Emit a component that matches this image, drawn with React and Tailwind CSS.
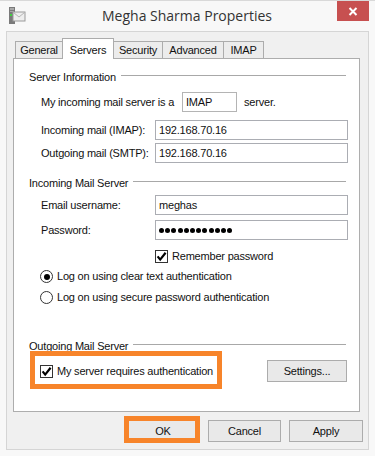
import React from "react";

function CheckBox() {
  return (
    <span className="flex h-[13px] w-[13px] shrink-0 items-center justify-center border border-[#333333] bg-white">
      <svg width="11" height="11" viewBox="0 0 11 11">
        <path d="M1.6 5.4 L4.2 8.6 L9.6 1.8" fill="none" stroke="#000" strokeWidth="2.2" />
      </svg>
    </span>
  );
}

function Radio({ checked }) {
  return (
    <span className="flex h-[13px] w-[13px] shrink-0 items-center justify-center rounded-full border border-[#333333] bg-white">
      {checked && <span className="h-[6px] w-[6px] rounded-full bg-black" />}
    </span>
  );
}

function GroupHeader({ children }) {
  return (
    <div className="flex h-[13px] items-center pl-[15px] pr-[13px]">
      <span className="leading-[13px] whitespace-nowrap">{children}</span>
      <div className="ml-[5px] mb-[4px] h-px flex-1 bg-[#a8a8a8]" />
    </div>
  );
}

function Field({ children }) {
  return (
    <div className="flex h-[20px] w-[193px] items-center border border-[#abadb3] bg-white pl-[3px]">
      {children}
    </div>
  );
}

function FieldRow({ label, children, cls }) {
  return (
    <div className={"flex h-[20px] items-center pl-[27px] " + cls}>
      <span className="w-[114px] leading-[13px]">{label}</span>
      <Field>{children}</Field>
    </div>
  );
}

function Btn({ children, w }) {
  return (
    <div
      className={
        "flex h-[22px] items-center justify-center border border-[#acacac] bg-[#e9e9e9] " + w
      }
    >
      {children}
    </div>
  );
}

export default function App() {
  return (
    <div className="flex h-[456px] w-[375px] flex-col overflow-hidden border-t border-[#d9d9d9] bg-[#f8f8f8] font-['Liberation_Sans',Arial,sans-serif] text-[11px] tracking-[-0.2px] text-[#111]">
      {/* Title bar */}
      <div className="flex h-[30px] items-start">
        <div className="w-[37px] pl-[8px] pt-[6px]">
          <svg width="18" height="18" viewBox="0 0 18 18">
            <rect x="1" y="0" width="6" height="17" fill="#7a7a7a" />
            <rect x="2" y="1" width="4" height="2" fill="#a9a9a9" />
            <rect x="2" y="4" width="4" height="1" fill="#a9a9a9" />
            <rect x="2" y="7" width="2" height="2" fill="#3ed13e" />
            <rect x="5" y="5" width="12" height="9" fill="#eeeeee" stroke="#9a9a9a" strokeWidth="1" />
            <path d="M5.5 5.5 L11 10 L16.5 5.5" fill="none" stroke="#b5b5b5" strokeWidth="1" />
          </svg>
        </div>
        <div className="flex-1 pt-[5px] text-center font-['Open_Sans',sans-serif] text-[14px] leading-[20px] tracking-normal text-[#333333]">
          Megha Sharma Properties
        </div>
        <div className="mr-[6px] flex h-[20px] w-[32px] items-center justify-center bg-[#c75050]">
          <svg width="10" height="9" viewBox="0 0 10 9">
            <path d="M1.5 1 L8.5 8 M8.5 1 L1.5 8" stroke="#fff" strokeWidth="2" />
          </svg>
        </div>
      </div>

      {/* Client area */}
      <div className="ml-[6px] flex h-[419px] w-[363px] flex-col border border-[#d5d5d5] bg-[#f0f0f0]">
        {/* Tabs */}
        <div className="ml-[8px] mt-[6px] flex h-[20px] items-end">
          <div className="flex h-[17px] w-[47px] items-center justify-center border-l border-t border-[#acacac] bg-[#ececec]">
            General
          </div>
          <div className="relative z-10 -mb-px flex h-[21px] w-[52px] items-start justify-center border-x border-t border-[#acacac] bg-white pt-[3px]">
            Servers
          </div>
          <div className="flex h-[17px] w-[48px] items-center justify-center border-t border-[#acacac] bg-[#ececec]">
            Security
          </div>
          <div className="flex h-[17px] w-[61px] items-center justify-center border-l border-t border-[#acacac] bg-[#ececec]">
            Advanced
          </div>
          <div className="flex h-[17px] w-[41px] items-center justify-center border-x border-t border-[#acacac] bg-[#ececec]">
            IMAP
          </div>
        </div>

        {/* Panel */}
        <div className="ml-[6px] flex h-[354px] w-[347px] flex-col border border-[#adadad] bg-white">
          <div className="mt-[12px]">
            <GroupHeader>Server Information</GroupHeader>
          </div>
          <div className="mt-[8px] flex h-[20px] items-center pl-[27px]">
            <span className="w-[141px]">My incoming mail server is a</span>
            <div className="flex h-[20px] w-[55px] items-center border border-[#b4b4b4] pl-[3px]">IMAP</div>
            <span className="ml-[7px]">server.</span>
          </div>
          <FieldRow label="Incoming mail (IMAP):" cls="mt-[8px]">192.168.70.16</FieldRow>
          <FieldRow label="Outgoing mail (SMTP):" cls="mt-[3px]">192.168.70.16</FieldRow>

          <div className="mt-[14px]">
            <GroupHeader>Incoming Mail Server</GroupHeader>
          </div>
          <FieldRow label="Email username:" cls="mt-[5px]">meghas</FieldRow>
          <FieldRow label="Password:" cls="mt-[5px]">
            <div className="flex gap-[1.2px]">
              {Array.from({ length: 12 }).map((_, i) => (
                <span key={i} className="h-[5px] w-[5px] rounded-full bg-black" />
              ))}
            </div>
          </FieldRow>
          <div className="mt-[10px] flex h-[13px] items-center gap-[4px] pl-[141px]">
            <CheckBox />
            <span>Remember password</span>
          </div>
          <div className="mt-[7px] flex h-[13px] items-center gap-[4px] pl-[26px]">
            <Radio checked />
            <span>Log on using clear text authentication</span>
          </div>
          <div className="mt-[8px] flex h-[13px] items-center gap-[4px] pl-[26px]">
            <Radio />
            <span>Log on using secure password authentication</span>
          </div>

          <div className="mt-[36px]">
            <GroupHeader>Outgoing Mail Server</GroupHeader>
          </div>
          <div className="relative mt-[7px] flex h-[22px] items-center pl-[26px]">
            <div className="flex items-center gap-[4px]">
              <CheckBox />
              <span>My server requires authentication</span>
            </div>
            <div className="ml-auto mr-[12px]">
              <Btn w="w-[80px]">Settings...</Btn>
            </div>
            <div className="absolute left-[16px] top-[-9px] h-[38px] w-[192px] border-[5px] border-[#f7842a]" />
          </div>
        </div>

        {/* Bottom buttons */}
        <div className="mt-[8px] flex justify-end gap-[8px] pr-[5px]">
          <div className="relative">
            <Btn w="w-[74px]">OK</Btn>
            <div className="absolute left-[-2px] top-[-4px] h-[27px] w-[76px] border-[5px] border-[#f7842a]" />
          </div>
          <Btn w="w-[73px]">Cancel</Btn>
          <Btn w="w-[74px]">Apply</Btn>
        </div>
      </div>
    </div>
  );
}
